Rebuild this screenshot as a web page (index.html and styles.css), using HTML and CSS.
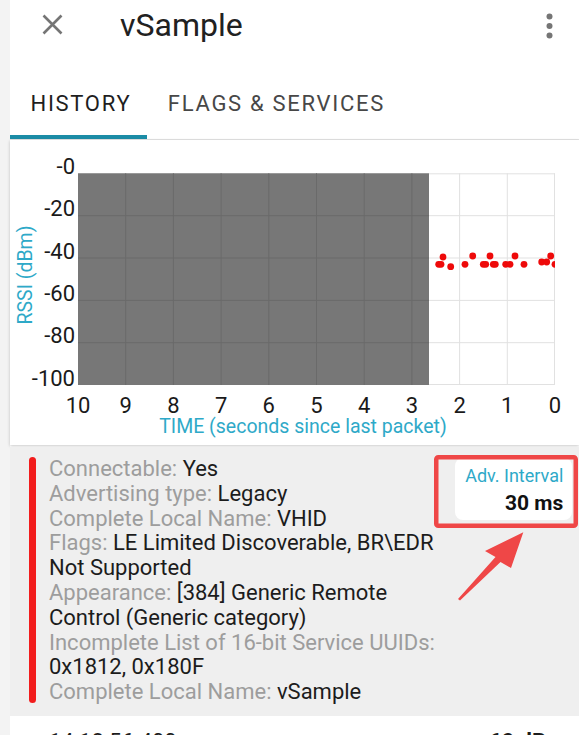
FILE: index.html
```html
<!DOCTYPE html>
<html>
<head>
<meta charset="utf-8">
<title>vSample</title>
<link rel="stylesheet" href="styles.css">
</head>
<body>
<div class="screen">
  <header class="appbar">
    <svg class="close" viewBox="0 0 21 21"><path d="M1.5 1.5 L19.5 19.5 M19.5 1.5 L1.5 19.5" stroke="#757575" stroke-width="2.6" fill="none"/></svg>
    <h1 class="title">vSample</h1>
    <svg class="more" viewBox="0 0 7 26"><circle cx="3.5" cy="3.5" r="3" fill="#757575"/><circle cx="3.5" cy="13" r="3" fill="#757575"/><circle cx="3.5" cy="22.5" r="3" fill="#757575"/></svg>
  </header>
  <nav class="tabs">
    <div class="tab active">HISTORY</div>
    <div class="tab">FLAGS &amp; SERVICES</div>
  </nav>
  <section class="chart">
    <svg class="chart-svg" width="569" height="305" viewBox="0 0 569 305">
      <defs><clipPath id="plot"><rect x="68" y="33.3" width="477" height="211.7"/></clipPath></defs>
      <rect x="68" y="33.3" width="477" height="211.7" fill="#ffffff"/>
      <g stroke="#e1e1e1" stroke-width="1">
        <line x1="68" y1="33.8" x2="545" y2="33.8"/>
        <line x1="68" y1="75.7" x2="545" y2="75.7"/>
        <line x1="68" y1="118" x2="545" y2="118"/>
        <line x1="68" y1="160.4" x2="545" y2="160.4"/>
        <line x1="68" y1="202.7" x2="545" y2="202.7"/>
        <line x1="68" y1="244.5" x2="545" y2="244.5"/>
        <line x1="449.6" y1="33.3" x2="449.6" y2="245"/>
        <line x1="497.3" y1="33.3" x2="497.3" y2="245"/>
        <line x1="544.5" y1="33.3" x2="544.5" y2="245"/>
      </g>
      <rect x="68" y="33.3" width="351" height="211.7" fill="#777777"/>
      <g stroke="#6a6a6a" stroke-width="1">
        <line x1="68" y1="75.7" x2="419" y2="75.7"/>
        <line x1="68" y1="118" x2="419" y2="118"/>
        <line x1="68" y1="160.4" x2="419" y2="160.4"/>
        <line x1="68" y1="202.7" x2="419" y2="202.7"/>
        <line x1="115.7" y1="33.3" x2="115.7" y2="245"/>
        <line x1="163.4" y1="33.3" x2="163.4" y2="245"/>
        <line x1="211.1" y1="33.3" x2="211.1" y2="245"/>
        <line x1="258.8" y1="33.3" x2="258.8" y2="245"/>
        <line x1="306.5" y1="33.3" x2="306.5" y2="245"/>
        <line x1="354.2" y1="33.3" x2="354.2" y2="245"/>
        <line x1="401.9" y1="33.3" x2="401.9" y2="245"/>
      </g>
      <g fill="#ee0a0a" clip-path="url(#plot)">
        <circle cx="428.7" cy="124.3" r="3.4"/>
        <circle cx="431" cy="124.3" r="3.4"/>
        <circle cx="433" cy="117" r="3.4"/>
        <circle cx="440.7" cy="126.7" r="3.4"/>
        <circle cx="455" cy="124.3" r="3.4"/>
        <circle cx="462.7" cy="116" r="3.4"/>
        <circle cx="473.3" cy="124.3" r="3.4"/>
        <circle cx="475.7" cy="124.3" r="3.4"/>
        <circle cx="480" cy="116" r="3.4"/>
        <circle cx="483.3" cy="124.3" r="3.4"/>
        <circle cx="485.3" cy="124.3" r="3.4"/>
        <circle cx="495.7" cy="124.3" r="3.4"/>
        <circle cx="500" cy="124.3" r="3.4"/>
        <circle cx="505" cy="116" r="3.4"/>
        <circle cx="514" cy="124.3" r="3.4"/>
        <circle cx="531.7" cy="122" r="3.4"/>
        <circle cx="536.7" cy="122" r="3.4"/>
        <circle cx="540.7" cy="116" r="3.4"/>
        <circle cx="545" cy="124.3" r="3.4"/>
      </g>
      <g class="axis-num" text-anchor="end">
        <text x="65" y="34">-0</text>
        <text x="65" y="76.4">-20</text>
        <text x="65" y="118.7">-40</text>
        <text x="65" y="161">-60</text>
        <text x="65" y="203.4">-80</text>
        <text x="65" y="245.7">-100</text>
      </g>
      <g class="axis-num" text-anchor="middle">
        <text x="68" y="272.7">10</text>
        <text x="115.7" y="272.7">9</text>
        <text x="163.4" y="272.7">8</text>
        <text x="211.1" y="272.7">7</text>
        <text x="258.8" y="272.7">6</text>
        <text x="306.5" y="272.7">5</text>
        <text x="354.2" y="272.7">4</text>
        <text x="401.9" y="272.7">3</text>
        <text x="449.6" y="272.7">2</text>
        <text x="497.3" y="272.7">1</text>
        <text x="545" y="272.7">0</text>
      </g>
      <text class="axis-title" x="293" y="293.3" text-anchor="middle">TIME (seconds since last packet)</text>
      <text class="axis-title" text-anchor="middle" transform="translate(21.5 135) rotate(-90)">RSSI (dBm)</text>
    </svg>
  </section>
  <section class="packet">
    <div class="bar"></div>
    <div class="fields">
      <p><span class="label">Connectable: </span>Yes</p>
      <p><span class="label">Advertising type: </span>Legacy</p>
      <p><span class="label">Complete Local Name: </span>VHID</p>
      <p><span class="label">Flags: </span>LE Limited Discoverable, BR\EDR Not Supported</p>
      <p><span class="label">Appearance: </span>[384] Generic Remote Control (Generic category)</p>
      <p><span class="label">Incomplete List of 16-bit Service UUIDs: </span>0x1812, 0x180F</p>
      <p><span class="label">Complete Local Name: </span>vSample</p>
    </div>
    <div class="interval">
      <div class="interval-label">Adv. Interval</div>
      <div class="interval-value">30 ms</div>
    </div>
    <svg class="annotation" viewBox="0 0 569 269">
      <rect x="426.25" y="10.25" width="139.5" height="68.5" rx="2" fill="none" stroke="#ef4747" stroke-width="4.5"/>
      <polygon points="513.3,85.3 501,121 490.5,114.9 450,153.5 448,152 485.5,110.1 475,104" fill="#ef4747"/>
    </svg>
  </section>
  <div class="row">
    <span class="time">14:18:56.400</span>
    <span class="rssi">-60 dBm</span>
  </div>
</div>
</body>
</html>
```
FILE: styles.css
```css
* { box-sizing: border-box; }

html, body {
  margin: 0;
  padding: 0;
}

body {
  width: 579px;
  height: 735px;
  overflow: hidden;
  background: #f3f3f3;
  font-family: Roboto, "Noto Sans", "Liberation Sans", sans-serif;
  color: #1c1c1c;
}

.screen {
  margin-left: 10px;
  background: #ffffff;
}

.appbar {
  height: 48px;
  display: flex;
  align-items: center;
  padding: 0 26px 0 32px;
}

.close {
  width: 21px;
  height: 21px;
  flex: none;
}

.title {
  flex: 1;
  margin: 0 0 0 57px;
  font-size: 32px;
  font-weight: 400;
  line-height: 48px;
  color: #212121;
  position: relative;
  top: 1px;
}

.more {
  width: 7px;
  height: 26px;
  flex: none;
  margin-top: 4px;
}

.tabs {
  margin-top: 24px;
  display: flex;
  border-bottom: 1px solid #e4e4e4;
}

.tab {
  height: 67px;
  padding: 0 16px 0 20.5px;
  display: flex;
  align-items: center;
  font-size: 22px;
  letter-spacing: 1.7px;
  color: #474747;
  border-bottom: 4px solid transparent;
}

.tab.active {
  color: #1e1e1e;
  border-bottom-color: #1b8ca6;
}

.chart {
  height: 305px;
  position: relative;
  box-shadow: 0 1px 3px rgba(0, 0, 0, 0.22);
}

.chart-svg {
  display: block;
}

.axis-num {
  font-family: Roboto, "Noto Sans", sans-serif;
  font-size: 22px;
  fill: #1a1a1a;
}

.axis-title {
  font-family: Roboto, "Noto Sans", sans-serif;
  font-size: 19.5px;
  fill: #2ea9c8;
}

.packet {
  position: relative;
  margin-top: 2px;
  background: #efefef;
  display: flex;
  align-items: flex-start;
  padding: 10px 7px 11px 18.7px;
}

.bar {
  flex: none;
  align-self: stretch;
  width: 7.3px;
  margin-bottom: 2px;
  background: #f21c1c;
  border-radius: 4px;
}

.fields {
  flex: 1;
  margin-left: 13px;
  font-size: 22px;
  line-height: 24.8px;
  color: #1c1c1c;
}

.fields p {
  margin: 0;
}

.label {
  color: #9d9d9d;
}

.interval {
  flex: none;
  width: 117px;
  height: 62px;
  margin: 1px 0 0 14px;
  padding: 6.7px 8.7px 0 0;
  background: #ffffff;
  border-radius: 8px;
  text-align: right;
}

.interval-label {
  font-size: 18px;
  line-height: 22px;
  color: #2ea9c8;
}

.interval-value {
  margin-top: 2px;
  font-size: 21px;
  line-height: 28px;
  font-weight: 700;
  color: #111111;
}

.annotation {
  position: absolute;
  left: 0;
  top: 0;
  width: 569px;
  height: 269px;
  pointer-events: none;
}

.row {
  background: #ffffff;
  display: flex;
  justify-content: space-between;
  padding: 14px 14px 0 39px;
  height: 60px;
  font-size: 22px;
  line-height: 24.8px;
  color: #1c1c1c;
}

.rssi {
  font-weight: 700;
}
```
